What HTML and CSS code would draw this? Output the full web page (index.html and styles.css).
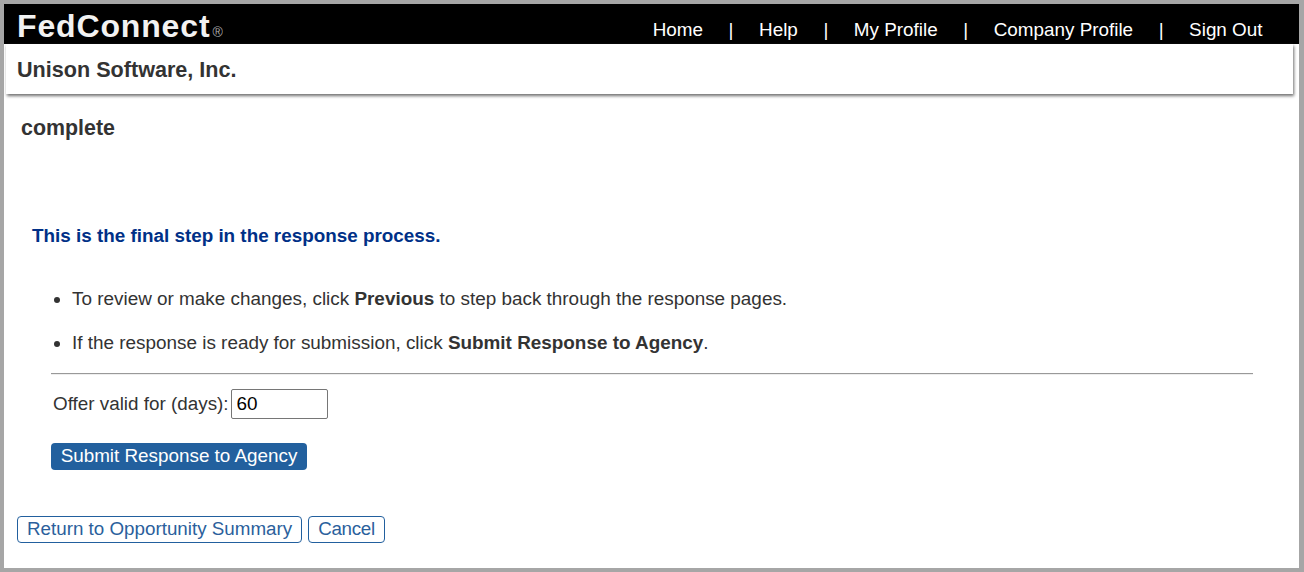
FILE: index.html
```html
<!DOCTYPE html>
<html lang="en">
<head>
<meta charset="utf-8">
<title>FedConnect</title>
<link rel="stylesheet" href="styles.css">
</head>
<body>
<div class="frame">
  <header class="topbar">
    <div class="logo">FedConnect<span class="reg">®</span></div>
    <nav class="nav">
      <a href="#">Home</a><span class="sep">|</span>
      <a href="#">Help</a><span class="sep">|</span>
      <a href="#">My Profile</a><span class="sep">|</span>
      <a href="#">Company Profile</a><span class="sep">|</span>
      <a href="#">Sign Out</a>
    </nav>
  </header>
  <div class="company">Unison Software, Inc.</div>
  <main class="content">
    <h1 class="title">complete</h1>
    <section class="panel">
      <p class="lead">This is the final step in the response process.</p>
      <ul class="steps">
        <li>To review or make changes, click <b>Previous</b> to step back through the response pages.</li>
        <li>If the response is ready for submission, click <b>Submit Response to Agency</b>.</li>
      </ul>
      <hr class="rule">
      <div class="field">
        <label for="days">Offer valid for (days):</label>
        <input id="days" class="input" type="text" value="60">
      </div>
      <button class="btn-primary" type="button">Submit Response to Agency</button>
    </section>
    <div class="actions">
      <button class="btn-outline" type="button">Return to Opportunity Summary</button>
      <button class="btn-outline btn-cancel" type="button">Cancel</button>
    </div>
  </main>
</div>
</body>
</html>
```
FILE: styles.css
```css
* { box-sizing: border-box; }
html, body { margin: 0; padding: 0; height: 100%; overflow: hidden; }
body { background: #fff; font-family: "Liberation Sans", Arial, sans-serif; color: #333; }
.frame {
  width: 1304px;
  height: 572px;
  border-style: solid;
  border-color: #a6a6a6;
  border-width: 4px 5px 4px 4px;
  background: #fff;
  display: flex;
  flex-direction: column;
}
.topbar {
  height: 40px;
  background: #000;
  display: flex;
  justify-content: space-between;
  padding-left: 13px;
  padding-right: 36.5px;
  flex: none;
}
.logo {
  font-size: 32px;
  font-weight: bold;
  color: #f2f2f2;
  letter-spacing: 0.85px;
  line-height: 45px;
  height: 40px;
  white-space: nowrap;
  overflow: hidden;
}
.reg { font-size: 14px; font-weight: normal; color: #aaa; letter-spacing: 0; margin-left: 2px; }
.nav { display: flex; align-items: flex-start; padding-top: 15px; font-size: 18.88px; line-height: 22px; }
.nav a { color: #fff; text-decoration: none; }
.sep { color: #fff; width: 56px; text-align: center; }
.company {
  flex: none;
  height: 50px;
  margin: 0 6px 0 2px;
  padding: 13px 11px 0;
  background: #fff;
  box-shadow: 1px 2px 3px 0 #6f6f6f;
  font-size: 21.6px;
  line-height: 25px;
  font-weight: bold;
  color: #333;
}
.content { flex: 1; }
.title { margin: 22px 0 0 17px; font-size: 21.4px; line-height: 25px; font-weight: bold; color: #333; }
.panel { margin: 0 0 0 47px; width: 1202px; }
.lead { margin: 84px 0 0 -19px; font-size: 18.85px; line-height: 21px; font-weight: bold; color: #003087; }
.steps { margin: 42px 0 0; padding: 0 0 0 21px; font-size: 18.9px; line-height: 21px; }
.steps li { margin-bottom: 23px; }
.steps li:last-child { margin-bottom: 0; }
.steps b { color: #333; }
.rule { margin: 20px 0 0; border: 0; border-top: 1px solid #999; border-bottom: 1px solid #eee; height: 2px; }
.field { display: flex; align-items: center; margin: 14px 0 0 2px; font-size: 18.85px; }
.field label { margin-right: 2px; }
.input {
  width: 97px;
  height: 30px;
  border: 1px solid #767676;
  border-radius: 2px;
  padding: 0 5px;
  font: 18.9px "Liberation Sans", Arial, sans-serif;
  color: #000;
}
.btn-primary {
  display: block;
  margin: 24px 0 0;
  width: 256px;
  height: 27px;
  padding: 0 0 2px;
  border: 0;
  border-radius: 4px;
  background: #22609e;
  color: #fff;
  font: 18.85px/25px "Liberation Sans", Arial, sans-serif;
}
.actions { display: flex; gap: 6px; margin: 46px 0 0 13px; }
.btn-outline {
  height: 27px;
  padding: 0 9px 2px;
  border: 1px solid #22609e;
  border-radius: 4px;
  background: #fff;
  color: #2b5f9c;
  font: 18.8px/23px "Liberation Sans", Arial, sans-serif;
}
.btn-cancel { letter-spacing: -0.3px; }
```
